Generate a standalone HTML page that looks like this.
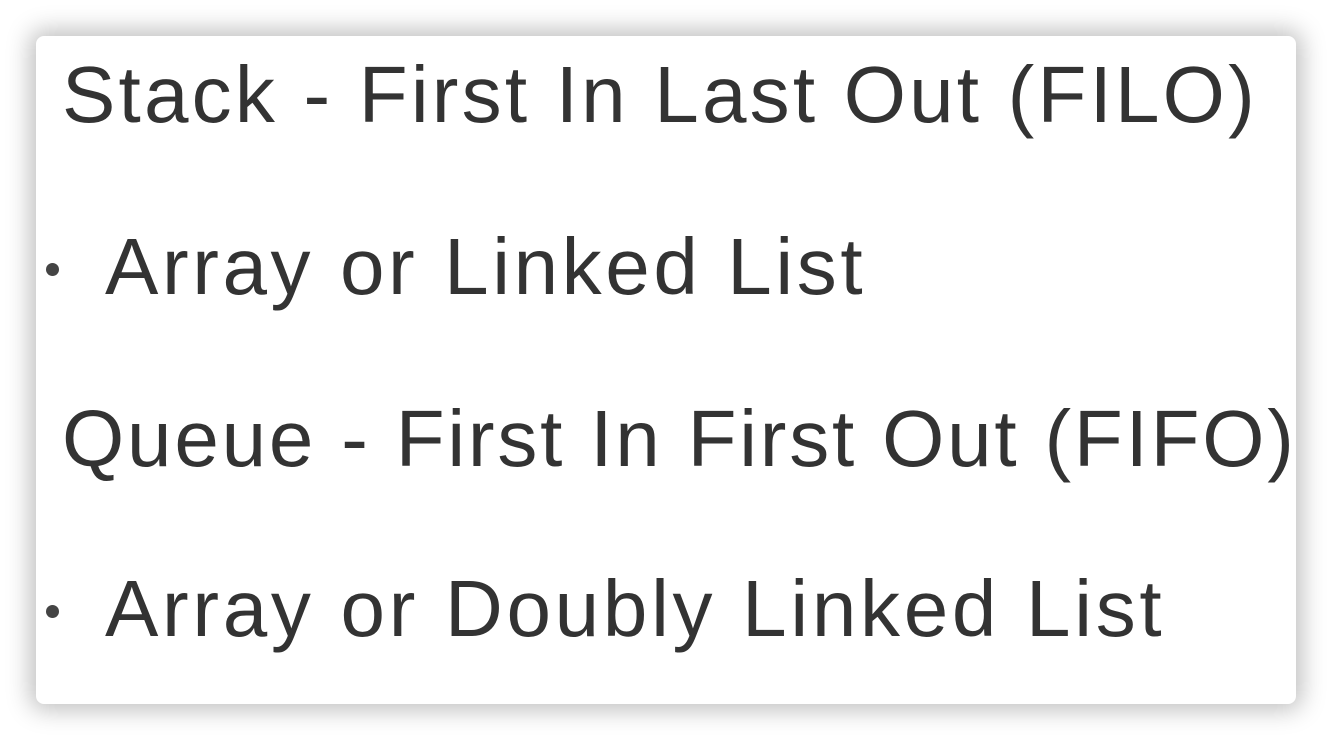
<!DOCTYPE html>
<html><head><style>
html,body{margin:0;width:1332px;height:740px;overflow:hidden;background:#fff;}
.bg{position:absolute;left:0;top:0;width:1332px;height:740px;background:#fff;}
.card{position:absolute;left:36px;top:36px;width:1260px;height:668px;background:#fff;border-radius:8px;box-shadow:0 0 24px 6px rgba(0,0,0,0.25);}
.t{position:absolute;font-family:"Liberation Sans",Arial,sans-serif;font-size:80px;color:#333;white-space:nowrap;line-height:1;}
.b{position:absolute;width:13px;height:13px;border-radius:50%;background:#444;}
</style></head><body>
<div class="bg"></div>
<div class="card"></div>
<div class="t" style="left:62px;top:55px;letter-spacing:3.2px">Stack - First In Last Out (FILO)</div>
<div class="b" style="left:46px;top:263px"></div>
<div class="t" style="left:105px;top:227px;letter-spacing:3.6px">Array or Linked List</div>
<div class="t" style="left:62px;top:399px;letter-spacing:2.8px">Queue - First In First Out (FIFO)</div>
<div class="b" style="left:46px;top:605px"></div>
<div class="t" style="left:105px;top:569px;letter-spacing:3.7px">Array or Doubly Linked List</div>
</body></html>
